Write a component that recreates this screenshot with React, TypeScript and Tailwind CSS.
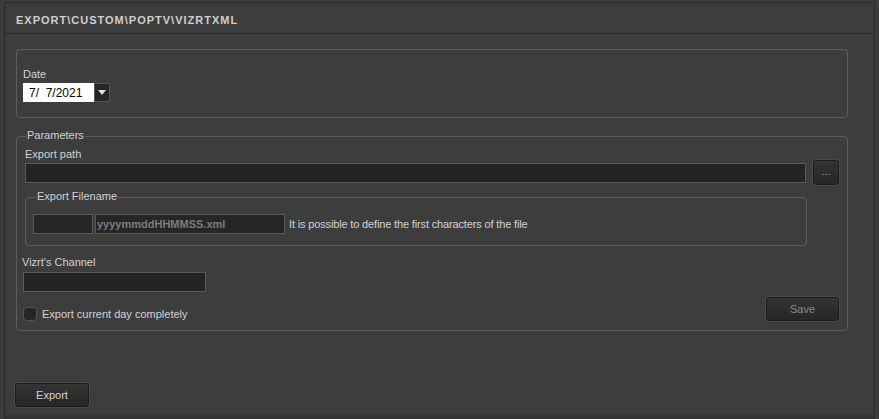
import React from "react";

function Group({
  legend,
  legendLeft,
  className,
  children,
}: {
  legend?: string;
  legendLeft?: string;
  className: string;
  children: React.ReactNode;
}) {
  return (
    <div className={"relative rounded-[4px] border border-[#5e5e5e] " + className}>
      {legend && (
        <span
          className={
            "absolute top-[-8px] bg-[#3d3d3d] px-[1px] leading-[13px] text-[#d2d2d2] " + (legendLeft ?? "left-[9px]")
          }
        >
          {legend}
        </span>
      )}
      {children}
    </div>
  );
}

function Btn({ label, className, textClass }: { label: string; className: string; textClass: string }) {
  return (
    <div
      className={
        "flex items-center justify-center rounded-[3px] border border-[#1c1c1c] bg-gradient-to-b from-[#343434] to-[#262626] shadow-[0_0_0_1px_#4a4a4a] " +
        className
      }
    >
      <span className={"text-[11px] leading-[13px] " + textClass}>{label}</span>
    </div>
  );
}

export default function App() {
  return (
    <div
      className="h-[419px] w-[879px] overflow-hidden bg-[#3d3d3d] pl-[4px] pr-[4px] pt-[2px] text-[11px] text-[#d2d2d2]"
      style={{ fontFamily: '"Liberation Sans", Arial, sans-serif' }}
    >
      <div className="flex h-[417px] flex-col border-l border-r border-t border-[#2a2a2a]">
        {/* title */}
        <div className="h-[31px] shrink-0 border-b border-[#2a2a2a] pl-[11px] pt-[11px]">
          <div className="text-[11px] font-bold leading-[13px] tracking-[1px] text-[#cfcfcf]">
            EXPORT\CUSTOM\POPTV\VIZRTXML
          </div>
        </div>

        <div className="flex flex-1 flex-col pl-[11px]">
          {/* Date group */}
          <Group className="mt-[15px] h-[69px] w-[832px] pl-[6px] pt-[18px]">
            <div className="leading-[13px]">Date</div>
            <div className="mt-[2px] flex h-[19px]">
              <div className="flex h-[19px] w-[71px] items-center bg-white pl-[6px] text-[12px] text-black whitespace-pre">
                7/  7/2021
              </div>
              <div className="flex h-[19px] w-[16px] items-center justify-center border border-[#555] bg-[#262626]">
                <svg width="8" height="5" viewBox="0 0 8 5">
                  <path d="M0 0 H8 L4 5 Z" fill="#e0e0e0" />
                </svg>
              </div>
            </div>
          </Group>

          {/* Parameters group */}
          <Group legend="Parameters" className="mt-[18px] w-[832px] pb-[9px] pl-[8px] pt-[11px]">
            <div className="leading-[13px]">Export path</div>
            <div className="mt-[2px] flex h-[20px]">
              <div className="h-[20px] w-[781px] border border-[#5a5a5a] bg-[#242424]" />
              <Btn
                label="..."
                className="-mt-[3px] ml-[7px] h-[25px] w-[26px]"
                textClass="text-[#9a9a9a] -mt-[3px]"
              />
            </div>

            <Group
              legend="Export Filename"
              legendLeft="left-[10px]"
              className="mt-[14px] h-[49px] w-[782px] pl-[7px] pt-[16px]"
            >
              <div className="flex h-[20px] items-center">
                <div className="h-[20px] w-[60px] border border-[#5a5a5a] bg-[#262626]" />
                <div className="ml-[2px] flex h-[20px] w-[190px] items-center border border-[#5a5a5a] bg-[#262626] pl-[1px] text-[11px] font-bold text-[#7c7c7c]">
                  yyyymmddHHMMSS.xml
                </div>
                <span className="ml-[4px] leading-[13px] tracking-[-0.15px]">
                  It is possible to define the first characters of the file
                </span>
              </div>
            </Group>

            <div className="-ml-[3px] mt-[10px] leading-[13px]">Vizrt&apos;s Channel</div>
            <div className="-ml-[2px] mt-[3px] h-[20px] w-[183px] border border-[#5a5a5a] bg-[#242424]" />

            <div className="mt-[5px] flex h-[24px] w-[814px] items-start justify-between">
              <div className="-ml-[2px] mt-[10px] flex items-center">
                <div className="h-[14px] w-[14px] rounded-[4px] border border-[#555] bg-[#262626]" />
                <span className="ml-[5px] leading-[13px]">Export current day completely</span>
              </div>
              <Btn label="Save" className="h-[24px] w-[73px]" textClass="text-[#8a8a8a]" />
            </div>
          </Group>

          <Btn label="Export" className="-ml-[1px] mt-[52px] h-[24px] w-[74px]" textClass="text-[#d2d2d2]" />

          <div className="mt-auto h-[6px] -ml-[11px] bg-gradient-to-b from-[#3d3d3d] to-[#2f2f2f]" />
        </div>
      </div>
    </div>
  );
}
